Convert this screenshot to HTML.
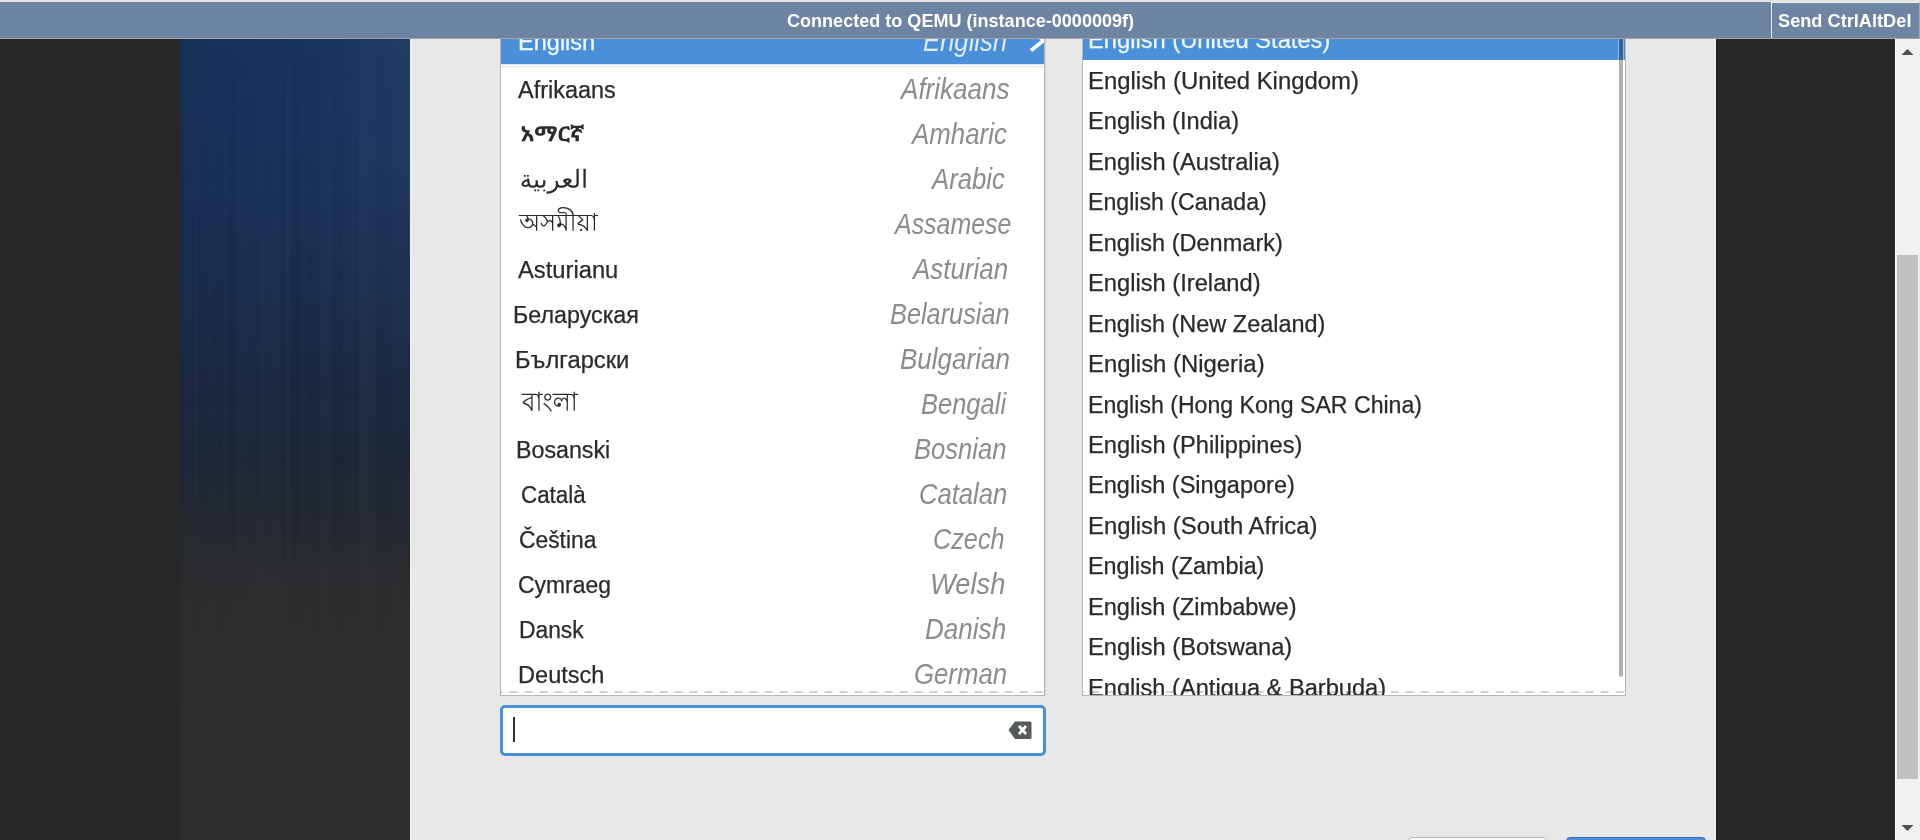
<!DOCTYPE html>
<html><head><meta charset="utf-8">
<style>
html,body{margin:0;padding:0;width:1920px;height:840px;overflow:hidden;background:#282828;}
body{position:relative;font-family:"Liberation Sans",sans-serif;}
.a{position:absolute;}
.t{position:absolute;-webkit-text-stroke:0.25px currentColor;font-family:"Liberation Sans",sans-serif;line-height:1;white-space:nowrap;transform-origin:0 0;}
.ov{position:absolute;left:0;top:0;}
#strip{left:0;top:0;width:1920px;height:2px;background:#e3e5e3;z-index:10;}
#bar{left:0;top:2px;width:1920px;height:36px;background:#6e84a3;border-bottom:1px solid #a3a3a3;z-index:10;}
#btn{left:1771px;top:2px;width:147px;height:35px;border-left:1px solid #eef0f2;border-top:1px solid #eef0f2;border-right:1px solid #a8aaa8;z-index:11;}
#panel{left:180px;top:39px;width:230px;height:801px;
  background:linear-gradient(180deg,#1a3562 0px,#1a3159 150px,#1b2d4d 260px,#1c2941 340px,#1d2738 420px,#242930 480px,#2b2c2e 545px,#2d2d2d 610px,#2e2e2e 801px);}
#streaks{left:180px;top:39px;width:230px;height:801px;
  -webkit-mask-image:linear-gradient(180deg,rgba(0,0,0,0.4) 0px,#000 250px,#000 430px,rgba(0,0,0,0) 610px);
  mask-image:linear-gradient(180deg,rgba(0,0,0,0.4) 0px,#000 250px,#000 430px,rgba(0,0,0,0) 610px);}
#hgrad{left:180px;top:39px;width:230px;height:801px;background:linear-gradient(90deg,rgba(0,0,0,0.07) 0px,rgba(0,0,0,0.02) 110px,rgba(255,255,255,0.035) 230px);-webkit-mask-image:linear-gradient(180deg,#000 0px,#000 120px,rgba(0,0,0,0) 380px);mask-image:linear-gradient(180deg,#000 0px,#000 120px,rgba(0,0,0,0) 380px);}
#dlg{left:410px;top:39px;width:1306px;height:801px;background:#e8e8e7;}
#dlgl{left:410px;top:39px;width:1px;height:801px;background:#f3f3f2;}
#dlgr{left:1715px;top:39px;width:1px;height:801px;background:#f3f3f2;}
#darkr{left:1716px;top:39px;width:1px;height:801px;background:#1f1f1f;}
#sb{left:1895px;top:39px;width:25px;height:801px;background:#f1f1f1;border-left:1px solid #fdfdfd;box-sizing:border-box;}
#thumb{left:1897px;top:255px;width:21px;height:524px;background:#c1c1c1;}
#list1{left:500px;top:10px;width:543px;box-shadow:1px 0 0 rgba(182,182,179,0.35);height:684px;background:#fff;border:1px solid #b6b6b3;overflow:hidden;}
#list2{left:1082px;top:10px;width:542px;height:684px;background:#fff;border:1px solid #b6b6b3;overflow:hidden;}
#sel1{left:501px;top:10px;width:543px;height:54px;background:#4a90d9;}
#sel1b{left:501px;top:64px;width:543px;height:1px;background:#d4e5f6;}
#sep1{left:501px;top:66px;width:543px;height:2px;background:linear-gradient(180deg,#e9e9e7 0,#e9e9e7 1px,#f5f5f4 1px);}
#sel2{left:1083px;top:10px;width:542px;height:50px;background:#4a90d9;}
#dash1{left:501px;top:691px;width:543px;height:2px;
  background:linear-gradient(90deg,#d0d0ce 0px,#d0d0ce 8px,transparent 8px,transparent 15px) 8.6px 0/15px 2px repeat-x;}
#dash2{left:1083px;top:691px;width:542px;height:2px;
  background:linear-gradient(90deg,#d0d0ce 0px,#d0d0ce 8px,transparent 8px,transparent 15px) 7.7px 0/15px 2px repeat-x;}
#osb{left:1618px;top:20px;width:4px;height:656px;background:rgba(0,0,0,0.3);background-clip:padding-box;border:1px solid rgba(255,255,255,0.4);border-radius:0 0 3px 3px;}
#entry{left:500px;top:705px;width:540px;height:45px;background:#fff;border:3px solid #4a90d9;border-radius:5px;}
#cursor{left:513px;top:717px;width:1.5px;height:25px;background:#2e3436;}
#btn1{left:1408px;top:837px;width:137px;height:20px;background:#fbfbfa;border:1px solid #b6b6b3;border-radius:4px;}
#btn2{left:1566px;top:837px;width:138px;height:20px;background:#4a90d9;border:1px solid #2f6fb8;border-radius:4px;}
</style></head><body>
<div class="a" id="panel"></div>
<div class="a" id="hgrad"></div>
<div class="a" id="streaks"><svg width='230' height='801' style='display:block;filter:blur(0.8px)'><rect x='0' y='0' width='3' height='801' fill='#000' fill-opacity='0.047'/><rect x='3' y='0' width='2' height='801' fill='#000' fill-opacity='0.004'/><rect x='5' y='0' width='3' height='801' fill='#fff' fill-opacity='0.015'/><rect x='8' y='0' width='3' height='801' fill='#000' fill-opacity='0.002'/><rect x='11' y='0' width='2' height='801' fill='#fff' fill-opacity='0.006'/><rect x='13' y='0' width='2' height='801' fill='#000' fill-opacity='0.041'/><rect x='15' y='0' width='3' height='801' fill='#fff' fill-opacity='0.016'/><rect x='18' y='0' width='2' height='801' fill='#000' fill-opacity='0.029'/><rect x='20' y='0' width='3' height='801' fill='#fff' fill-opacity='0.001'/><rect x='23' y='0' width='3' height='801' fill='#000' fill-opacity='0.021'/><rect x='26' y='0' width='5' height='801' fill='#fff' fill-opacity='0.008'/><rect x='31' y='0' width='3' height='801' fill='#fff' fill-opacity='0.003'/><rect x='34' y='0' width='3' height='801' fill='#000' fill-opacity='0.019'/><rect x='37' y='0' width='2' height='801' fill='#fff' fill-opacity='0.014'/><rect x='39' y='0' width='4' height='801' fill='#000' fill-opacity='0.034'/><rect x='43' y='0' width='3' height='801' fill='#fff' fill-opacity='0.012'/><rect x='46' y='0' width='3' height='801' fill='#fff' fill-opacity='0.007'/><rect x='49' y='0' width='6' height='801' fill='#000' fill-opacity='0.039'/><rect x='55' y='0' width='3' height='801' fill='#fff' fill-opacity='0.013'/><rect x='58' y='0' width='6' height='801' fill='#fff' fill-opacity='0.011'/><rect x='64' y='0' width='2' height='801' fill='#000' fill-opacity='0.006'/><rect x='66' y='0' width='8' height='801' fill='#fff' fill-opacity='0.009'/><rect x='74' y='0' width='4' height='801' fill='#fff' fill-opacity='0.001'/><rect x='78' y='0' width='8' height='801' fill='#fff' fill-opacity='0.014'/><rect x='86' y='0' width='8' height='801' fill='#fff' fill-opacity='0.008'/><rect x='94' y='0' width='5' height='801' fill='#fff' fill-opacity='0.012'/><rect x='99' y='0' width='2' height='801' fill='#fff' fill-opacity='0.021'/><rect x='101' y='0' width='4' height='801' fill='#000' fill-opacity='0.035'/><rect x='105' y='0' width='6' height='801' fill='#fff' fill-opacity='0.018'/><rect x='111' y='0' width='6' height='801' fill='#000' fill-opacity='0.041'/><rect x='117' y='0' width='4' height='801' fill='#000' fill-opacity='0.044'/><rect x='121' y='0' width='4' height='801' fill='#fff' fill-opacity='0.009'/><rect x='125' y='0' width='4' height='801' fill='#fff' fill-opacity='0.001'/><rect x='129' y='0' width='3' height='801' fill='#000' fill-opacity='0.037'/><rect x='132' y='0' width='8' height='801' fill='#000' fill-opacity='0.025'/><rect x='140' y='0' width='4' height='801' fill='#fff' fill-opacity='0.014'/><rect x='144' y='0' width='8' height='801' fill='#fff' fill-opacity='0.011'/><rect x='152' y='0' width='6' height='801' fill='#000' fill-opacity='0.021'/><rect x='158' y='0' width='4' height='801' fill='#000' fill-opacity='0.048'/><rect x='162' y='0' width='3' height='801' fill='#fff' fill-opacity='0.004'/><rect x='165' y='0' width='2' height='801' fill='#fff' fill-opacity='0.012'/><rect x='167' y='0' width='3' height='801' fill='#000' fill-opacity='0.014'/><rect x='170' y='0' width='5' height='801' fill='#fff' fill-opacity='0.009'/><rect x='175' y='0' width='3' height='801' fill='#000' fill-opacity='0.035'/><rect x='178' y='0' width='5' height='801' fill='#fff' fill-opacity='0.016'/><rect x='183' y='0' width='4' height='801' fill='#fff' fill-opacity='0.022'/><rect x='187' y='0' width='8' height='801' fill='#fff' fill-opacity='0.017'/><rect x='195' y='0' width='4' height='801' fill='#000' fill-opacity='0.020'/><rect x='199' y='0' width='6' height='801' fill='#000' fill-opacity='0.020'/><rect x='205' y='0' width='3' height='801' fill='#000' fill-opacity='0.022'/><rect x='208' y='0' width='5' height='801' fill='#000' fill-opacity='0.003'/><rect x='213' y='0' width='3' height='801' fill='#fff' fill-opacity='0.013'/><rect x='216' y='0' width='5' height='801' fill='#fff' fill-opacity='0.001'/><rect x='221' y='0' width='5' height='801' fill='#fff' fill-opacity='0.009'/><rect x='226' y='0' width='3' height='801' fill='#000' fill-opacity='0.030'/><rect x='229' y='0' width='2' height='801' fill='#fff' fill-opacity='0.021'/></svg></div>
<div class="a" id="dlg"></div>
<div class="a" id="dlgl"></div>
<div class="a" id="dlgr"></div>
<div class="a" id="darkr"></div>
<div class="a" id="list1"></div>
<div class="a" id="list2"></div>
<div class="a" id="sel1"></div>
<div class="a" id="sel1b"></div>
<div class="a" id="sep1"></div>
<div class="a" id="sel2"></div>
<div class="a" id="dash1"></div>
<div class="a" id="dash2"></div>
<div class="a" style="left:0;top:0;width:1920px;height:840px;clip-path:inset(39px 876px 145px 501px);">
<div class='t' style='left:786.50px;top:11.70px;font-size:18px;font-weight:700;-webkit-text-stroke:0;color:#fff;transform:scaleX(1.0029)'>Connected to QEMU (instance-0000009f)</div>
<div class='t' style='left:518.05px;top:30.50px;font-size:23px;color:#f2f7fc;transform:scaleX(1.0236)'>English</div>
<div class='t' style='left:517.70px;top:78.50px;font-size:23px;color:#282b2c;transform:scaleX(1.0200)'>Afrikaans</div>
<div class='t' style='left:517.90px;top:258.50px;font-size:23px;color:#282b2c;transform:scaleX(1.0323)'>Asturianu</div>
<div class='t' style='left:513.48px;top:303.50px;font-size:23px;color:#282b2c;transform:scaleX(1.0116)'>Беларуская</div>
<div class='t' style='left:514.83px;top:348.50px;font-size:23px;color:#282b2c;transform:scaleX(1.0327)'>Български</div>
<div class='t' style='left:516.28px;top:438.50px;font-size:23px;color:#282b2c;transform:scaleX(1.0100)'>Bosanski</div>
<div class='t' style='left:520.73px;top:483.50px;font-size:23px;color:#282b2c;transform:scaleX(0.9712)'>Català</div>
<div class='t' style='left:518.81px;top:528.50px;font-size:23px;color:#282b2c;transform:scaleX(0.9922)'>Čeština</div>
<div class='t' style='left:517.90px;top:573.50px;font-size:23px;color:#282b2c;transform:scaleX(0.9956)'>Cymraeg</div>
<div class='t' style='left:519.42px;top:618.50px;font-size:23px;color:#282b2c;transform:scaleX(0.9921)'>Dansk</div>
<div class='t' style='left:518.35px;top:663.50px;font-size:23px;color:#282b2c;transform:scaleX(1.0247)'>Deutsch</div>
<div class='t' style='left:923.12px;top:26.80px;font-size:29px;font-style:italic;-webkit-text-stroke:0;color:#e2ecf8;transform:scaleX(0.8844)'>English</div>
<div class='t' style='left:900.70px;top:74.80px;font-size:29px;font-style:italic;-webkit-text-stroke:0;color:#8a8c8d;transform:scaleX(0.8983)'>Afrikaans</div>
<div class='t' style='left:911.89px;top:119.80px;font-size:29px;font-style:italic;-webkit-text-stroke:0;color:#8a8c8d;transform:scaleX(0.8916)'>Amharic</div>
<div class='t' style='left:932.29px;top:164.80px;font-size:29px;font-style:italic;-webkit-text-stroke:0;color:#8a8c8d;transform:scaleX(0.8867)'>Arabic</div>
<div class='t' style='left:895.46px;top:209.80px;font-size:29px;font-style:italic;-webkit-text-stroke:0;color:#8a8c8d;transform:scaleX(0.8600)'>Assamese</div>
<div class='t' style='left:912.59px;top:254.80px;font-size:29px;font-style:italic;-webkit-text-stroke:0;color:#8a8c8d;transform:scaleX(0.8934)'>Asturian</div>
<div class='t' style='left:890.33px;top:299.80px;font-size:29px;font-style:italic;-webkit-text-stroke:0;color:#8a8c8d;transform:scaleX(0.8733)'>Belarusian</div>
<div class='t' style='left:899.50px;top:344.80px;font-size:29px;font-style:italic;-webkit-text-stroke:0;color:#8a8c8d;transform:scaleX(0.8967)'>Bulgarian</div>
<div class='t' style='left:921.42px;top:389.80px;font-size:29px;font-style:italic;-webkit-text-stroke:0;color:#8a8c8d;transform:scaleX(0.8792)'>Bengali</div>
<div class='t' style='left:914.32px;top:434.80px;font-size:29px;font-style:italic;-webkit-text-stroke:0;color:#8a8c8d;transform:scaleX(0.8825)'>Bosnian</div>
<div class='t' style='left:919.23px;top:479.80px;font-size:29px;font-style:italic;-webkit-text-stroke:0;color:#8a8c8d;transform:scaleX(0.8835)'>Catalan</div>
<div class='t' style='left:933.36px;top:524.80px;font-size:29px;font-style:italic;-webkit-text-stroke:0;color:#8a8c8d;transform:scaleX(0.8709)'>Czech</div>
<div class='t' style='left:930.48px;top:569.80px;font-size:29px;font-style:italic;-webkit-text-stroke:0;color:#8a8c8d;transform:scaleX(0.9408)'>Welsh</div>
<div class='t' style='left:924.80px;top:614.80px;font-size:29px;font-style:italic;-webkit-text-stroke:0;color:#8a8c8d;transform:scaleX(0.8989)'>Danish</div>
<div class='t' style='left:914.31px;top:659.80px;font-size:29px;font-style:italic;-webkit-text-stroke:0;color:#8a8c8d;transform:scaleX(0.8883)'>German</div>
<svg class='ov' width='1920' height='840' viewBox='0 0 1920 840'><g fill='#282b2c'><path aria-label='አማርኛ' d='M521.4 141.2 525.66 132.52Q523.61 132.29 522.67 131.31Q521.72 130.33 521.72 128.63V126.34H524.99V128.06Q524.99 129.29 525.58 129.75Q526.16 130.21 527.5 130.21H530.17L524.8 141.2ZM530.05 141.2Q530.03 139.33 529.71 138.19Q529.38 137.04 528.76 136.4Q528.14 135.77 527.22 135.42L528.3 133.08Q529.94 133.6 531.07 134.56Q532.21 135.52 532.82 137.12Q533.43 138.73 533.48 141.2ZM548.27 141.2 551.7 134.04H550.99Q549.08 134.04 548.12 133.26Q547.17 132.48 547.17 130.92Q547.17 130.38 547.25 129.8Q547.33 129.23 547.49 128.63H545.19V133.98Q543.99 134.92 542.61 135.39Q541.23 135.87 539.8 135.87Q537.57 135.87 536.29 134.79Q535 133.71 535 131.63Q535 130.02 535.74 128.84Q536.49 127.65 537.87 126.99Q539.25 126.34 541.09 126.34H552.46Q554.71 126.34 555.77 127.1Q556.83 127.86 556.83 129.46Q556.83 130.21 556.48 131.09Q556.14 131.98 555.68 132.96L551.77 141.2ZM540.15 133.4Q540.66 133.4 541.04 133.26Q541.42 133.13 541.78 132.92V128.63H541.25Q539.94 128.63 539.16 129.34Q538.38 130.04 538.38 131.46Q538.38 132.48 538.87 132.94Q539.37 133.4 540.15 133.4ZM552.5 131.73H552.8L553.01 131.31Q553.26 130.83 553.38 130.4Q553.49 129.96 553.49 129.69Q553.49 129.23 553.14 128.93Q552.78 128.63 552.14 128.63H550.87Q550.66 129.15 550.59 129.55Q550.53 129.96 550.53 130.33Q550.53 131.11 551.02 131.42Q551.52 131.73 552.5 131.73ZM569.09 142.6Q568.19 142.6 567.67 142.18Q567.14 141.77 566.86 141.2H565.02Q562.65 141.2 561.27 140.71Q559.89 140.21 559.29 139.05Q558.69 137.89 558.69 135.94V134.81Q558.69 132.38 559.27 130.73Q559.84 129.09 560.88 128.13Q561.91 127.17 563.32 126.75Q564.72 126.34 566.38 126.34H569.07L569.97 129.98H569.32Q568.54 129.98 567.96 129.64Q567.39 129.29 566.98 128.46H566.4Q564.93 128.46 563.97 129.04Q563.02 129.63 562.56 130.97Q562.1 132.31 562.1 134.58V135.94Q562.1 137.14 562.36 137.83Q562.63 138.52 563.28 138.8Q563.94 139.08 565.07 139.08H566.86Q567.11 138.56 567.65 138.12Q568.19 137.69 569.09 137.69H569.85L569.23 140.14L569.85 142.6ZM571.35 137.52V135.77Q571.35 133.96 571.91 132.7Q572.47 131.44 573.49 130.66Q574.5 129.88 575.86 129.51Q577.21 129.15 578.8 129.15H581.26L582.16 132.79H581.54Q580.83 132.79 580.19 132.48Q579.56 132.17 579.17 131.27H578.82Q577.47 131.27 576.56 131.75Q575.65 132.23 575.2 133.18Q574.75 134.12 574.75 135.54V136.44ZM575.51 141.2V137.52H571.35L572.89 135.17H578.92V141.2ZM575.46 129.84V126.86H578.85V129.84ZM570.43 129.31 571.05 126.86 570.43 124.4H571.19Q572.08 124.4 572.61 124.82Q573.14 125.23 573.42 125.8H581.01Q581.29 125.23 581.81 124.82Q582.34 124.4 583.24 124.4H584L583.38 126.86L584 129.31H583.24Q582.34 129.31 581.81 128.9Q581.29 128.48 581.01 127.92H573.42Q573.14 128.48 572.61 128.9Q572.08 129.31 571.19 129.31Z'/><path aria-label='العربية' d='M527.89 184.24Q527.71 183.73 527.55 183.13Q527.39 182.53 527.24 181.3Q525.78 181.44 524.77 182.26Q523.42 183.34 523.44 184.1Q523.45 184.59 524.55 184.9Q525.65 185.2 527.89 184.24ZM527.07 179.55Q527.02 179.07 526.99 178.55H529.24Q529.25 180.59 529.69 182.71Q529.94 183.94 530.63 184.9Q531.01 185.43 532.38 185.43H533.29V187.67H531.71Q530.6 187.67 529.71 187.05Q529.16 186.67 528.7 185.96Q527.01 186.84 525.1 186.84Q524.42 186.84 523.71 186.66Q521.4 186.08 521.4 184.2Q521.4 182.1 523.89 180.56Q525.23 179.73 527.07 179.55ZM526.96 174.9H528.8V176.73H526.96ZM523.91 174.9H525.74V176.73H523.91ZM536.7 186.62Q535.76 187.67 533.91 187.67H532.81V185.43H533.23Q534.44 185.43 534.98 184.9Q535.58 184.3 535.58 183.01V180.37H537.83V183.01Q537.83 184.3 538.43 184.9Q538.97 185.43 540.18 185.43H540.85V187.67H539.5Q537.67 187.67 536.7 186.62ZM537.32 189.49H539.15V191.32H537.32ZM534.26 189.49H536.09V191.32H534.26ZM544.26 186.62Q543.38 187.67 541.46 187.67H540.36V185.43H540.79Q542 185.43 542.54 184.9Q543.13 184.3 543.13 183.01V180.37H545.38V183.01Q545.38 185.29 544.26 186.62ZM543.34 189.49H545.18V191.32H543.34ZM555.3 180.98H557.55Q557.91 182.34 557.95 182.71Q558.07 183.96 558.97 184.9Q559.48 185.43 560.71 185.43H561.63V187.67H560.04Q558.45 187.67 557.84 186.92Q557.01 190.3 553.94 191.91Q550.47 193.75 546.53 193.75V191.51Q550.25 191.51 552.73 189.96Q555.4 188.28 555.82 185.75Q555.95 185.04 555.95 184.17Q555.95 182.64 555.3 180.98ZM567.42 185.42Q565.05 187.67 562.58 187.67H561.14V185.43H562.31Q563.62 185.43 564.43 184.95Q565.15 184.51 565.64 184.03Q564.45 183 563.62 181.91Q563.26 181.43 563.26 180.89Q563.26 180.51 563.42 180.01Q563.61 179.34 564.88 178.71Q565.97 178.16 567.42 178.16Q568.88 178.16 569.97 178.71Q571.24 179.34 571.43 180.01Q571.59 180.51 571.59 180.89Q571.59 181.43 571.23 181.91Q570.29 183.1 569.21 184.03Q569.59 184.41 570.42 184.95Q571.17 185.43 572.53 185.43H573.71V187.67H572.27Q569.8 187.67 567.42 185.42ZM566.74 180.5Q566.17 180.64 566.17 181.03Q566.17 181.38 567.42 182.54Q568.68 181.38 568.68 181.03Q568.68 180.64 568.11 180.5Q567.74 180.41 567.42 180.41Q567.11 180.41 566.74 180.5ZM578.73 183.16Q578.73 185.32 577.67 186.55Q576.69 187.67 574.81 187.67H573.22V185.43H574.14Q575.35 185.43 575.88 184.9Q576.48 184.3 576.48 183.01V168.75H578.73ZM583.45 168.75H585.7V187.67H583.45Z'/><path aria-label='অসমীয়া' d='M535.98 230.84V227.5Q535.38 226.65 534.61 226.07Q533.84 225.5 532.99 225.28Q532.35 226.65 531.03 227.47Q529.7 228.3 528.09 228.3Q525.22 228.3 522.89 225.77Q520.55 223.24 519.89 219.4L521.15 219.24Q521.75 222.61 523.71 224.82Q525.66 227.03 528.09 227.03Q529.73 227.03 530.89 225.96Q532.04 224.9 532.04 223.37Q532.04 221.78 531.03 220.67Q530.02 219.56 528.57 219.56Q528.69 219.72 528.77 219.92Q528.85 220.13 528.85 220.32Q528.85 221.05 528.35 221.57Q527.84 222.1 527.11 222.1Q526.36 222.1 525.8 221.59Q525.25 221.08 525.25 220.35Q525.25 219.62 525.8 219.06Q526.36 218.51 527.15 218.44Q527.15 217.74 526.86 217.12Q526.58 216.5 526.04 216.06H518.75V214.95H540.4V216.06H537.25V230.84H535.98ZM535.98 225.91V216.06H527.62Q528 216.41 528.2 216.98Q528.41 217.55 528.41 218.28Q530.46 218.28 531.91 219.78Q533.36 221.27 533.36 223.4Q533.36 223.53 533.35 223.67Q533.33 223.82 533.3 224.01Q534.19 224.32 534.88 224.82Q535.57 225.31 535.98 225.91ZM552.02 230.84V222.74Q551.45 222.07 550.87 221.69Q550.28 221.3 549.81 221.3Q549.18 221.3 548.41 221.99Q547.63 222.67 546.97 223.85Q546.24 225.09 545.41 225.82Q544.57 226.55 543.81 226.55Q542.61 226.55 541.7 225.55Q540.78 224.55 540.66 223.05L541.76 222.74Q541.86 223.82 542.44 224.55Q543.02 225.28 543.81 225.28Q544.38 225.28 545.15 224.36Q545.93 223.43 546.97 221.62Q546.24 219.65 545.06 218.21Q543.88 216.76 542.39 216.06H539.77V214.95H556.44V216.06H553.28V230.84H552.02ZM548.07 220.83Q548.45 220.45 548.91 220.24Q549.37 220.03 549.81 220.03Q550.35 220.03 550.92 220.27Q551.48 220.51 552.02 220.99V216.06H544.6Q545.83 217.11 546.72 218.32Q547.6 219.52 548.07 220.83ZM565.5 230.84Q565.5 228.46 564.22 226.71Q562.94 224.96 561.08 224.8Q561.17 225.75 560.56 226.47Q559.94 227.19 559.03 227.19Q558.24 227.19 557.69 226.63Q557.13 226.07 557.13 225.28Q557.13 224.42 557.88 223.82Q558.62 223.21 559.66 223.21Q559.66 220.64 559.03 218.75Q558.4 216.85 557.29 216.06H555.81V214.95H569.92V216.06H566.76V230.84H565.5ZM565.5 226.39V216.06H558.87Q559.85 217.27 560.38 219.14Q560.92 221.02 560.92 223.37Q562.44 223.63 563.64 224.42Q564.84 225.21 565.5 226.39ZM572.44 230.84V216.06H569.29V214.95H572.44Q572.19 212.12 569.48 210.19Q566.76 208.27 562.97 208.27Q561.27 208.27 560.07 208.92Q558.87 209.57 558.87 210.5Q558.87 211.2 559.58 211.69Q560.29 212.18 561.3 212.18Q561.81 212.18 562.77 212.05Q563.73 211.93 564.24 211.93Q565.4 211.93 566.24 212.77Q567.08 213.61 567.08 214.79H565.81Q565.81 214.09 565.36 213.6Q564.9 213.1 564.24 213.1Q563.73 213.1 562.74 213.23Q561.74 213.36 561.24 213.36Q559.72 213.36 558.66 212.52Q557.61 211.67 557.61 210.5Q557.61 208.91 559.07 207.95Q560.54 207 562.97 207Q567.42 207 570.56 209.32Q573.71 211.64 573.71 214.95H576.86V216.06H573.71V230.84H572.44ZM586.74 230.84Q585.89 228.49 583.54 226.95Q581.19 225.41 578.06 225.12L577.11 223.37L581.69 219.87L578.06 216.06H576.23V214.95H591.16V216.06H588V230.84H586.74ZM586.74 228.46V216.06H579.8L583.59 220.03L578.69 223.85Q581.38 224.07 583.51 225.29Q585.64 226.52 586.74 228.46ZM581.06 231Q580.62 231 580.29 230.67Q579.96 230.33 579.96 229.89Q579.96 229.44 580.29 229.11Q580.62 228.77 581.06 228.77Q581.5 228.77 581.83 229.11Q582.16 229.44 582.16 229.89Q582.16 230.33 581.83 230.67Q581.5 231 581.06 231ZM593.78 230.84V220.19Q593.62 218.44 592.94 217.25Q592.27 216.06 591.41 216.06H590.53V214.95H591.41Q592.17 214.95 592.8 215.38Q593.43 215.81 593.78 216.54V213.04H595.04V214.95H598.2V216.06H595.04V230.84H593.78Z'/><path aria-label='বাংলা' d='M531.34 410.68Q530.44 408.01 528.26 406.14Q526.08 404.28 523.2 403.73L522.58 402.21Q524.27 400.38 526.49 399.04Q528.71 397.7 531.34 396.95V394.92H521.7V393.73H535.73V394.92H532.6V410.68H531.34ZM531.34 407.97V398.31Q529.15 398.95 527.32 400.02Q525.49 401.09 524.14 402.55Q526.18 402.92 528.04 404.34Q529.9 405.77 531.34 407.97ZM538.33 410.68V399.33Q538.17 397.46 537.5 396.19Q536.82 394.92 535.98 394.92H535.1V393.73H535.98Q536.73 393.73 537.36 394.19Q537.98 394.65 538.33 395.43V391.7H539.58V393.73H542.71V394.92H539.58V410.68H538.33ZM550.82 411.7Q549.6 409.43 547.69 407.45Q545.78 405.46 543.31 403.9L543.93 402.72Q546.56 404.34 548.58 406.46Q550.6 408.58 551.92 411.02L550.82 411.7ZM547.69 400.85Q546.19 400.85 545.14 399.77Q544.09 398.68 544.09 397.12Q544.09 395.56 545.14 394.48Q546.19 393.39 547.69 393.39Q549.19 393.39 550.24 394.48Q551.29 395.56 551.29 397.12Q551.29 398.68 550.24 399.77Q549.19 400.85 547.69 400.85ZM547.69 399.5Q548.66 399.5 549.35 398.8Q550.04 398.11 550.04 397.12Q550.04 396.14 549.35 395.45Q548.66 394.75 547.69 394.75Q546.72 394.75 546.03 395.45Q545.34 396.14 545.34 397.12Q545.34 398.11 546.03 398.8Q546.72 399.5 547.69 399.5ZM566.63 410.68V401.87Q566.29 400.51 565.6 399.67Q564.91 398.82 564.13 398.82Q563.35 398.82 562.8 399.62Q562.25 400.41 562.25 401.53H561Q560.9 400.38 560.14 399.6Q559.37 398.82 558.34 398.82Q557.05 398.82 556.13 399.82Q555.2 400.82 555.2 402.21Q555.2 403.53 555.99 404.48Q556.77 405.43 557.87 405.43Q557.71 405.26 557.62 405.02Q557.52 404.78 557.52 404.55Q557.52 403.8 558.04 403.26Q558.55 402.72 559.28 402.72Q560 402.72 560.5 403.26Q561 403.8 561 404.58Q561 405.5 560.17 406.14Q559.34 406.78 558.18 406.78Q556.43 406.78 555.19 405.45Q553.95 404.11 553.95 402.21Q553.95 400.24 555.24 398.85Q556.52 397.46 558.34 397.46Q559.43 397.46 560.32 398.02Q561.22 398.58 561.62 399.5Q562.03 398.58 562.7 398.02Q563.38 397.46 564.13 397.46Q564.82 397.46 565.49 397.95Q566.16 398.45 566.63 399.33V394.92H552.45V393.73H571.02V394.92H567.89V410.68H566.63ZM573.62 410.68V399.33Q573.46 397.46 572.79 396.19Q572.11 394.92 571.27 394.92H570.39V393.73H571.27Q572.02 393.73 572.65 394.19Q573.27 394.65 573.62 395.43V391.7H574.87V393.73H578V394.92H574.87V410.68H573.62Z'/></g></svg>
<svg class="ov" width="1920" height="840" viewBox="0 0 1920 840">
  <path d="M1031 50.5 L1043.5 40.5 L1036 34" stroke="#fff" stroke-width="3.6" stroke-linejoin="miter" fill="none"/>
</svg>
</div>
<div class="a" style="left:0;top:0;width:1920px;height:840px;clip-path:inset(39px 295px 145px 1083px);">
<div class='t' style='left:1088.14px;top:29.45px;font-size:23px;color:#f2f7fc;transform:scaleX(1.0302)'>English (United States)</div>
<div class='t' style='left:1088.12px;top:69.90px;font-size:23px;color:#282b2c;transform:scaleX(1.0388)'>English (United Kingdom)</div>
<div class='t' style='left:1088.14px;top:110.35px;font-size:23px;color:#282b2c;transform:scaleX(1.0278)'>English (India)</div>
<div class='t' style='left:1088.14px;top:150.80px;font-size:23px;color:#282b2c;transform:scaleX(1.0279)'>English (Australia)</div>
<div class='t' style='left:1088.19px;top:191.25px;font-size:23px;color:#282b2c;transform:scaleX(1.0057)'>English (Canada)</div>
<div class='t' style='left:1088.15px;top:231.70px;font-size:23px;color:#282b2c;transform:scaleX(1.0230)'>English (Denmark)</div>
<div class='t' style='left:1088.14px;top:272.15px;font-size:23px;color:#282b2c;transform:scaleX(1.0305)'>English (Ireland)</div>
<div class='t' style='left:1088.16px;top:312.60px;font-size:23px;color:#282b2c;transform:scaleX(1.0205)'>English (New Zealand)</div>
<div class='t' style='left:1088.12px;top:353.05px;font-size:23px;color:#282b2c;transform:scaleX(1.0389)'>English (Nigeria)</div>
<div class='t' style='left:1088.19px;top:393.50px;font-size:23px;color:#282b2c;transform:scaleX(1.0049)'>English (Hong Kong SAR China)</div>
<div class='t' style='left:1088.14px;top:433.95px;font-size:23px;color:#282b2c;transform:scaleX(1.0288)'>English (Philippines)</div>
<div class='t' style='left:1088.15px;top:474.40px;font-size:23px;color:#282b2c;transform:scaleX(1.0241)'>English (Singapore)</div>
<div class='t' style='left:1088.13px;top:514.85px;font-size:23px;color:#282b2c;transform:scaleX(1.0372)'>English (South Africa)</div>
<div class='t' style='left:1088.17px;top:555.30px;font-size:23px;color:#282b2c;transform:scaleX(1.0146)'>English (Zambia)</div>
<div class='t' style='left:1088.15px;top:595.75px;font-size:23px;color:#282b2c;transform:scaleX(1.0260)'>English (Zimbabwe)</div>
<div class='t' style='left:1088.14px;top:636.20px;font-size:23px;color:#282b2c;transform:scaleX(1.0308)'>English (Botswana)</div>
<div class='t' style='left:1088.15px;top:676.65px;font-size:23px;color:#282b2c;transform:scaleX(1.0272)'>English (Antigua &amp; Barbuda)</div>
<div class="a" id="osb"></div>
</div>
<div class="a" id="entry"></div>
<div class="a" id="cursor"></div>
<svg class="ov" width="1920" height="840" viewBox="0 0 1920 840">
  <path d="M1008.5 730 L1015 721.5 L1030 721.5 Q1031.5 721.5 1031.5 723 L1031.5 737.5 Q1031.5 739 1030 739 L1015 739 Z" fill="#555a5a"/>
  <path d="M1019 726 L1026 734 M1026 726 L1019 734" stroke="#fff" stroke-width="2.8" fill="none"/>
</svg>
<div class="a" id="btn1"></div>
<div class="a" id="btn2"></div>
<div class="a" id="sb"></div>
<div class="a" id="thumb"></div>
<svg class="ov" width="1920" height="840" viewBox="0 0 1920 840">
  <path d="M1901.5 55 L1907.5 49 L1913.5 55 Z" fill="#505050"/>
  <path d="M1901.5 825 L1913.5 825 L1907.5 831 Z" fill="#505050"/>
</svg>
<div class="a" id="strip"></div>
<div class="a" id="bar"></div>
<div class="a" id="btn"></div>
<div style="position:absolute;left:0;top:0;z-index:12;">
<div class='t' style='left:786.50px;top:11.70px;font-size:18px;font-weight:700;-webkit-text-stroke:0;color:#fff;transform:scaleX(1.0029)'>Connected to QEMU (instance-0000009f)</div>
<div class='t' style='left:1778.49px;top:11.90px;font-size:18px;font-weight:700;-webkit-text-stroke:0;color:#fff;transform:scaleX(1.0108)'>Send CtrlAltDel</div>
</div>
</body></html>
